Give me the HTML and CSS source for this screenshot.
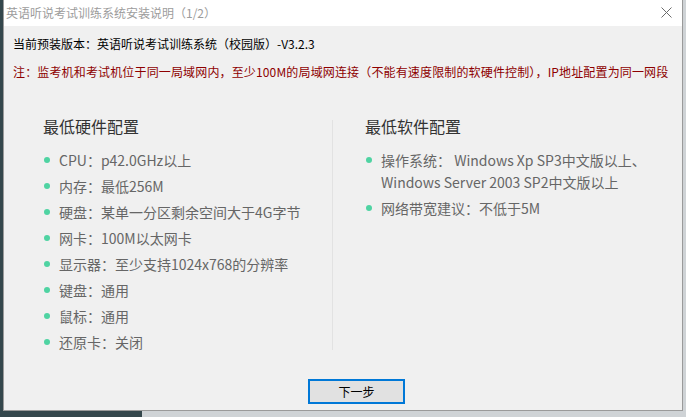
FILE: index.html
```html
<!DOCTYPE html>
<html lang="zh-CN">
<head>
<meta charset="utf-8">
<title>英语听说考试训练系统安装说明</title>
<link rel="stylesheet" href="styles.css">
</head>
<body>
<div class="window">
  <div class="titlebar">
    <span class="title">英语听说考试训练系统安装说明（1/2）</span>
    <svg class="close" width="11" height="11" viewBox="0 0 11 11"><path d="M0.5 0.5L10.5 10.5M10.5 0.5L0.5 10.5" stroke="#6b6b6b" stroke-width="1" fill="none"/></svg>
  </div>
  <div class="content">
    <p class="version">当前预装版本：英语听说考试训练系统（校园版）-V3.2.3</p>
    <p class="note">注：监考机和考试机位于同一局域网内，至少100M的局域网连接（不能有速度限制的软硬件控制），IP地址配置为同一网段</p>
    <div class="panel">
      <div class="col col-left">
        <h2 class="heading">最低硬件配置</h2>
        <ul class="list">
          <li>CPU：p42.0GHz以上</li>
          <li>内存：最低256M</li>
          <li>硬盘：某单一分区剩余空间大于4G字节</li>
          <li>网卡：100M以太网卡</li>
          <li>显示器：至少支持1024x768的分辨率</li>
          <li>键盘：通用</li>
          <li>鼠标：通用</li>
          <li>还原卡：关闭</li>
        </ul>
      </div>
      <div class="divider"></div>
      <div class="col col-right">
        <h2 class="heading">最低软件配置</h2>
        <ul class="list">
          <li>操作系统： Windows Xp SP3中文版以上、Windows Server 2003 SP2中文版以上</li>
          <li>网络带宽建议：不低于5M</li>
        </ul>
      </div>
    </div>
    <div class="footer">
      <button class="next">下一步</button>
    </div>
  </div>
</div>
</body>
</html>
```

FILE: styles.css
```css
html, body {
  margin: 0;
  padding: 0;
}
body {
  width: 686px;
  height: 417px;
  overflow: hidden;
  background: linear-gradient(to right, #34474c 142px, #cfd3d6 142px);
  font-family: "Noto Sans CJK SC", "Microsoft YaHei", sans-serif;
}
.window {
  margin-left: 3px;
  width: 678px;
  height: 410px;
  background: #f0f0f0;
  border: 1px solid #9a9a9a;
  border-top: none;
}
.titlebar {
  height: 26px;
  background: #ffffff;
  display: flex;
  align-items: center;
  justify-content: space-between;
  padding: 0 10px 0 2px;
}
.title {
  font-size: 12px;
  color: #9c9c9c;
  line-height: 26px;
}
.close {
  display: block;
  margin-top: -1px;
}
.content {
  padding: 8px 0 0 9px;
}
.version {
  margin: 0;
  font-size: 12px;
  line-height: 20px;
  color: #000;
}
.note {
  margin: 8px 0 0 0;
  font-size: 12px;
  line-height: 20px;
  color: #8e0000;
  letter-spacing: 0.15px;
  white-space: nowrap;
}
.panel {
  margin-top: 18px;
  width: 659px;
  height: 268px;
  display: flex;
}
.col {
  padding-top: 15px;
}
.col-left {
  width: 289px;
  padding-left: 30px;
}
.col-right {
  flex: 1;
  padding-left: 32px;
  padding-right: 10px;
}
.divider {
  width: 1px;
  background: #e2e2e2;
  margin: 20px 0 18px 0;
}
.heading {
  margin: 0;
  font-size: 16px;
  line-height: 22px;
  font-weight: normal;
  color: #333;
}
.list {
  list-style: none;
  margin: 12px 0 0 0;
  padding: 0;
}
.list li {
  position: relative;
  padding-left: 16px;
  font-size: 14px;
  line-height: 22px;
  color: #666;
  margin-bottom: 4px;
}
.list li::before {
  content: "";
  position: absolute;
  left: 1px;
  top: 8px;
  width: 6px;
  height: 6px;
  border-radius: 50%;
  background: #4fd3a2;
}
.col-right .list li {
  width: 280px;
}
.footer {
  margin-top: 10px;
  padding-left: 295px;
}
.next {
  width: 97px;
  height: 25px;
  border: 2px solid #0078d7;
  background: #e1e1e1;
  font-family: "Noto Sans CJK SC", sans-serif;
  font-size: 12px;
  color: #000;
  padding: 0;
  margin: 0;
}
```
